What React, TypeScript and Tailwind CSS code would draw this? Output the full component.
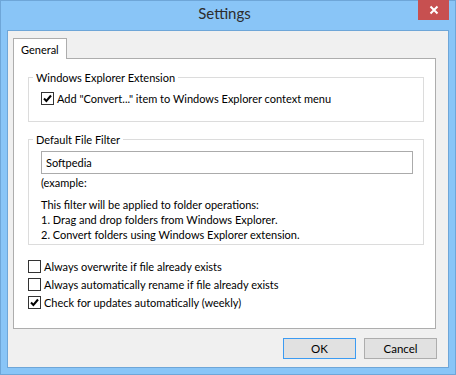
import React from 'react';

const font = { fontFamily: 'Lato, "Noto Sans", Arial, sans-serif' };

const Check: React.FC<{ checked?: boolean }> = ({ checked }) => (
  <span className="w-[13px] h-[13px] border border-[#333] bg-white flex items-center justify-center shrink-0">
    {checked && (
      <svg width="9" height="9" viewBox="0 0 9 9">
        <path d="M1 4.5 L3.4 7 L8 1.5" fill="none" stroke="#000" strokeWidth="2" />
      </svg>
    )}
  </span>
);

const Option: React.FC<{ checked?: boolean; label: string }> = ({ checked, label }) => (
  <div className="flex items-center gap-[3px] h-[18px]">
    <Check checked={checked} />
    <span>{label}</span>
  </div>
);

export default function App() {
  return (
    <div
      className="w-[456px] h-[375px] bg-[#89c5f7] border border-[#6ea6d8] flex flex-col text-[11px] text-black leading-[15px]"
      style={font}
    >
      {/* title bar */}
      <div className="h-[29px] flex items-start shrink-0">
        <div className="flex-1 text-center text-[15px] text-[#2d2d2d] pt-[5px] pl-[30px]">Settings</div>
        <div className="w-[31px] h-[20px] mt-[-1px] mr-[6px] bg-[#c75050] flex items-center justify-center">
          <svg width="10" height="10" viewBox="0 0 10 10">
            <path d="M1.5 1.5 L8.5 8.5 M8.5 1.5 L1.5 8.5" stroke="#fff" strokeWidth="2" />
          </svg>
        </div>
      </div>

      {/* client area */}
      <div className="flex-1 mx-[6px] mb-[6px] border border-[#6ea6d8] bg-[#f0f0f0] flex flex-col px-[5px] pt-[7px] pb-[8px]">
        {/* tab header */}
        <div className="flex h-[21px] shrink-0">
          <div className="w-[54px] h-[21px] bg-white border border-[#adadad] border-b-0 relative z-10 pl-[7px] pt-[3px]">
            General
          </div>
        </div>
        {/* tab panel */}
        <div className="h-[271px] mt-[-1px] mr-[7px] bg-white border border-[#adadad] pl-[14px] pr-[11px] pt-[11px] flex flex-col">
          <fieldset className="border border-[#dcdcdc] h-[52px] pl-[4px] pt-[4px]">
            <legend className="px-[3px]">Windows Explorer Extension</legend>
            <div className="pl-[8px]">
              <Option checked label={'Add "Convert..." item to Windows Explorer context menu'} />
            </div>
          </fieldset>

          <fieldset className="border border-[#dcdcdc] h-[113px] mt-[10px] pl-[4px] pt-[4px]">
            <legend className="px-[3px]">Default File Filter</legend>
            <div className="pl-[8px] flex flex-col">
              <div className="w-[372px] h-[23px] border border-[#ababab] px-[4px] flex items-center">Softpedia</div>
              <div className="mt-[1px]">(example:</div>
              <div className="mt-[7px]">
                <div>This filter will be applied to folder operations:</div>
                <div>1. Drag and drop folders from Windows Explorer.</div>
                <div>2. Convert folders using Windows Explorer extension.</div>
              </div>
            </div>
          </fieldset>

          <div className="mt-[12px] flex flex-col">
            <Option label="Always overwrite if file already exists" />
            <Option label="Always automatically rename if file already exists" />
            <Option checked label="Check for updates automatically (weekly)" />
          </div>
        </div>

        {/* buttons */}
        <div className="mt-[9px] flex justify-end gap-[8px] pr-[6px]">
          <button className="w-[73px] h-[21px] bg-[#e1e1e1] border border-[#3c9bf2] text-[11.5px]">OK</button>
          <button className="w-[73px] h-[21px] bg-[#e1e1e1] border border-[#adadad] text-[11.5px]">Cancel</button>
        </div>
      </div>
    </div>
  );
}
